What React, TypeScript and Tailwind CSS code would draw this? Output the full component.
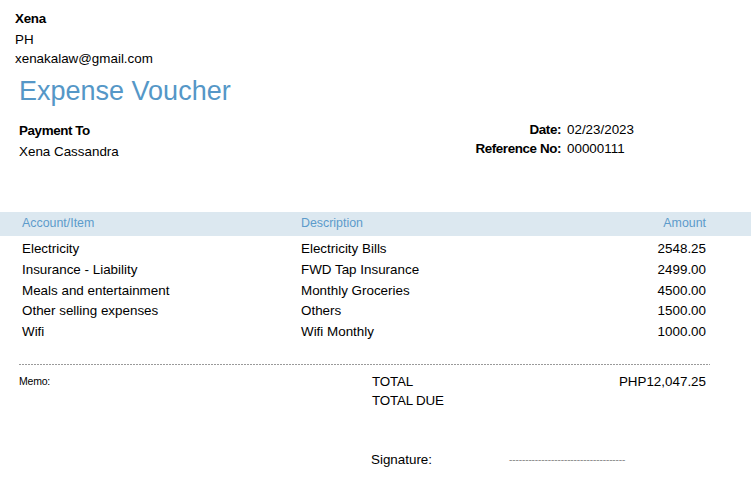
const items = [
  { account: 'Electricity', description: 'Electricity Bills', amount: '2548.25' },
  { account: 'Insurance - Liability', description: 'FWD Tap Insurance', amount: '2499.00' },
  { account: 'Meals and entertainment', description: 'Monthly Groceries', amount: '4500.00' },
  { account: 'Other selling expenses', description: 'Others', amount: '1500.00' },
  { account: 'Wifi', description: 'Wifi Monthly', amount: '1000.00' },
];

export default function App() {
  return (
    <div className="w-[751px] h-[488px] bg-white text-black overflow-hidden font-['Liberation_Sans',Arial,sans-serif]">
      {/* company */}
      <div className="pl-[15px] pt-[9px] text-[13.4px] leading-[19px]">
        <div className="font-bold tracking-[-0.3px] leading-[20.5px]">Xena</div>
        <div className="leading-[19px]">PH</div>
        <div>xenakalaw@gmail.com</div>
      </div>

      <h1 className="pl-[19px] mt-[7px] text-[27px] leading-[32px] text-[#5597c7]">Expense Voucher</h1>

      {/* payee + meta */}
      <div className="flex justify-between px-[19px] mt-[13px] text-[13.4px]">
        <div className="leading-[21px]">
          <div className="font-bold tracking-[-0.4px]">Payment To</div>
          <div>Xena Cassandra</div>
        </div>
        <div className="mr-[97px] leading-[19px]">
          <div className="flex justify-end gap-[6px]">
            <span className="font-bold tracking-[-0.4px]">Date:</span>
            <span className="w-[68px]">02/23/2023</span>
          </div>
          <div className="flex justify-end gap-[6px]">
            <span className="font-bold tracking-[-0.4px]">Reference No:</span>
            <span className="w-[68px]">00000111</span>
          </div>
        </div>
      </div>

      {/* table */}
      <div className="mt-[50px]">
        <div className="flex items-center h-[24px] bg-[#dce8f0] text-[12.4px] text-[#5c9bcb] pl-[22px] pr-[45px]">
          <div className="w-[279px]">Account/Item</div>
          <div className="flex-1">Description</div>
          <div>Amount</div>
        </div>
        <div className="pt-[3.5px] text-[13.4px] leading-[20.75px]">
          {items.map(row => (
            <div key={row.account} className="flex pl-[22px] pr-[45px]">
              <div className="w-[279px]">{row.account}</div>
              <div className="flex-1">{row.description}</div>
              <div>{row.amount}</div>
            </div>
          ))}
        </div>
      </div>

      <div className="ml-[19px] w-[691px] h-px mt-[21px] bg-[linear-gradient(to_right,#9a9a9a_60%,transparent_60%)] bg-[length:3px_1px]" />

      {/* totals */}
      <div className="flex pl-[19px] pr-[45px] mt-[7px]">
        <div className="w-[353px] text-[10.5px] leading-[19px] tracking-[-0.2px]">Memo:</div>
        <div className="flex-1 text-[13.4px] leading-[19px] tracking-[-0.2px]">
          <div>TOTAL</div>
          <div>TOTAL DUE</div>
        </div>
        <div className="text-[13.4px] leading-[19px]">PHP12,047.25</div>
      </div>

      <div className="flex items-center pl-[371px] mt-[40px] text-[13.4px] leading-[19px]">
        <div className="w-[138px]">Signature:</div>
        <div className="text-[10px] text-[#8a8a8a] tracking-[-0.1px]">------------------------------------</div>
      </div>
    </div>
  );
}
